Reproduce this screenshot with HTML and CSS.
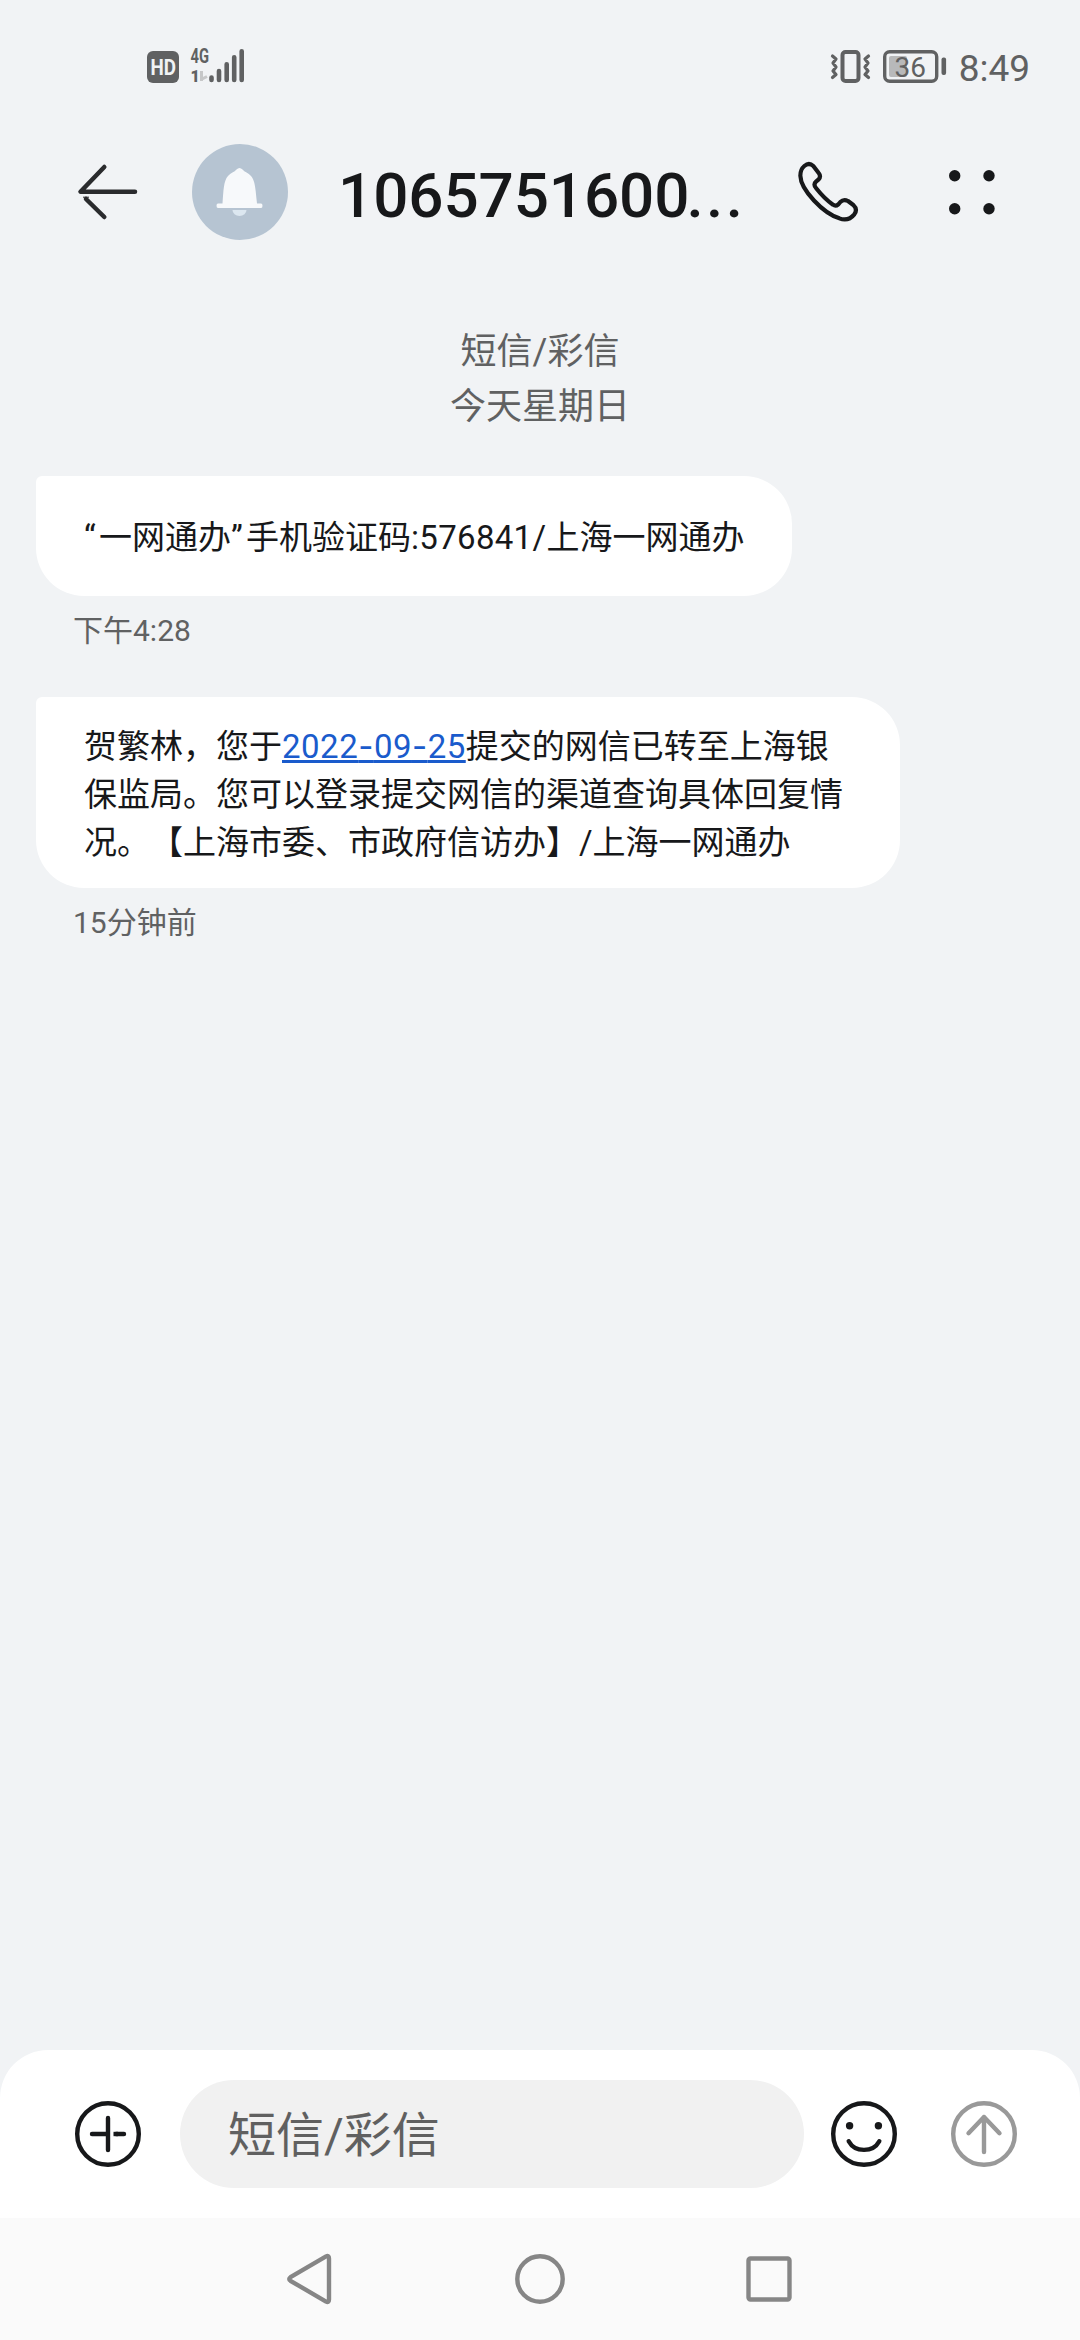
FILE: index.html
```html
<!DOCTYPE html>
<html lang="zh-CN">
<head>
  <meta charset="UTF-8" />
  <meta name="viewport" content="width=device-width, initial-scale=1.0" />
  <title>短信/彩信</title>
  <link rel="stylesheet" href="styles.css">
</head>
<body>

<div class="status-bar">
  <div class="status-left">
    <svg class="hd" width="32" height="32" viewBox="0 0 32 32">
      <rect width="32" height="32" rx="6" fill="#606162"/>
      <text x="3.500" y="24" textLength="25.500" lengthAdjust="spacingAndGlyphs">HD</text>
    </svg>
    <svg class="signal" width="56" height="40" viewBox="190 46 56 40">
      <text class="net" x="190.5" y="63.2" textLength="18.5" lengthAdjust="spacingAndGlyphs">4G</text>
      <text class="sim" x="190.5" y="82">1</text>
      <path d="M201.500 71v10M202 79l5-2.500" stroke="#c6c7c8" stroke-width="3" fill="none"/>
      <path d="M211.500 77.500v2.500M219 71v9M226.700 64.200v15.800M234.200 57.200v22.800M241.700 51.200v28.800" stroke="#606162" stroke-width="4.600" stroke-linecap="round"/>
    </svg>
  </div>
  <div class="status-right">
    <svg width="44" height="36" viewBox="829 48 44 36" fill="none" stroke="#606162">
      <rect x="842.500" y="52" width="16" height="29" rx="3" stroke-width="4"/>
      <path d="M832.500 56l3.500 3-3 4 3 4-3 4 3 3.500-3.500 3M868.500 56l-3.500 3 3 4-3 4 3 4-3 3.500 3.500 3" stroke-width="3.200" stroke-linecap="round" stroke-linejoin="round"/>
    </svg>
    <svg class="battery" width="66" height="36" viewBox="882 48 66 36">
      <rect x="889" y="56" width="18" height="21" rx="2" fill="#b8b9ba"/>
      <rect x="884.700" y="51.700" width="52" height="29.600" rx="5" fill="none" stroke="#606162" stroke-width="3.400"/>
      <rect x="941.500" y="57.500" width="4.600" height="17.500" rx="2" fill="#606162"/>
      <text class="level" x="910.300" y="76.700" text-anchor="middle">36</text>
    </svg>
    <span class="clock">8:49</span>
  </div>
</div>

<header class="header">
  <svg class="back" width="64" height="60" viewBox="76 162 64 60" fill="none" stroke="#2a2b2d" stroke-width="4.500" stroke-linecap="round" stroke-linejoin="round">
    <path d="M104.300 167L80.500 191.700H135"/>
    <path d="M86 199L104.300 217"/>
    <path d="M83 197.200h6" stroke-width="1" stroke-linecap="butt"/>
  </svg>
  <div class="avatar">
    <svg width="96" height="96" viewBox="192 144 96 96">
      <path d="M232.500 210h14a7 6 0 0 1-14 0z" fill="#dce7f0"/>
      <path d="M222.500 203.500C223.500 191 223.500 181 228 176C230.500 173 234.500 172 236.500 169.500Q239.500 166.500 242.500 169.500C244.500 172 248.500 173 251 176C255.500 181 255.500 191 257 203.500H261Q262.500 203.500 262.500 205.800T261 208H218Q216.500 208 216.500 205.800T218 203.500z" fill="#f7f9fb"/>
    </svg>
  </div>
  <h1 class="number">1065751600<span class="dots">...</span></h1>
  <svg class="call" width="65" height="65" viewBox="75 90 195 195">
    <path d="M103 108Q117 96 130 108L146 129Q154 139 146 148L138 155Q129 163 138 174Q163 206 189 224Q197 230 205 223L211 216Q221 206 234 213L250 225Q264 238 253 253Q235 275 208 265C160 250 92 180 91 137Q91 118 103 108Z" fill="none" stroke="#17181a" stroke-width="12.500" stroke-linejoin="round"/>
  </svg>
  <svg class="more" width="48" height="48" viewBox="948 167 48 48" fill="#17181a">
    <circle cx="954.700" cy="174.700" r="5.700"/>
    <circle cx="989" cy="174.700" r="5.700"/>
    <circle cx="954.700" cy="207.700" r="5.700"/>
    <circle cx="989" cy="207.700" r="5.700"/>
  </svg>
</header>

<main class="thread">
  <div class="day">
    <div>短信/彩信</div>
    <div>今天星期日</div>
  </div>

  <div class="message">
    <div class="bubble code"><span class="quote">“</span>一网通办<span class="quote">”</span>手机验证码<span class="digits">:576841/</span>上海一网通办</div>
    <div class="time">下午4:28</div>
  </div>

  <div class="message">
    <div class="bubble notice">贺繁林，您于<a class="date">2022<span>-</span>09<span>-</span>25</a>提交的网信已转至上海银<br>保监局。您可以登录提交网信的渠道查询具体回复情<br>况。【上海市委、市政府信访办】/上海一网通办</div>
    <div class="time">15分钟前</div>
  </div>
</main>

<footer class="composer">
  <svg width="72" height="72" viewBox="-36 -36 72 72" fill="none" stroke="#17181a" stroke-width="4.400" stroke-linecap="round">
    <circle r="30.800"/>
    <path d="M-16 0H0M0-16V16M8 0h8"/>
    <path d="M5.500 0H10" stroke-linecap="butt"/>
  </svg>
  <div class="input">短信/彩信</div>
  <svg width="72" height="72" viewBox="-36 -36 72 72" fill="none" stroke="#17181a" stroke-width="4.400" stroke-linecap="round">
    <circle r="30.800"/>
    <path d="M-15.300 7.200C-9 18.800 9 18.800 15.300 7.200"/>
    <circle cx="-14.400" cy="-8.300" r="3.700" fill="#17181a" stroke="none"/>
    <circle cx="14.400" cy="-8.300" r="3.700" fill="#17181a" stroke="none"/>
  </svg>
  <svg class="send" width="72" height="72" viewBox="-36 -36 72 72" fill="none" stroke="#999" stroke-width="4.400" stroke-linecap="round" stroke-linejoin="round">
    <circle r="30.800"/>
    <path d="M0 18V-17M-15.500-.800L0-17L15.500-.800"/>
  </svg>
</footer>

<nav class="nav">
  <svg width="60" height="60" viewBox="-30 -30 60 60"><path d="M-20.500-1.800L15-22.600Q18-24 18-20.500V20.500Q18 24 15 22.600L-20.500 1.800Q-23 0-20.500-1.800Z"/></svg>
  <svg width="60" height="60" viewBox="-30 -30 60 60"><circle r="22.700"/></svg>
  <svg width="60" height="60" viewBox="-30 -30 60 60"><rect x="-20.500" y="-20.500" width="41" height="41" rx="2"/></svg>
</nav>

</body>
</html>
```
FILE: styles.css
```css
html, body {
  margin: 0;
  padding: 0;
}

body {
  width: 1080px;
  height: 2340px;
  display: flex;
  flex-direction: column;
  overflow: hidden;
  background: #f1f3f5;
  color: #17181a;
  font-family: Roboto, "Noto Sans CJK SC", sans-serif;
  text-spacing-trim: space-all;
}

svg {
  display: block;
  flex: none;
}

/* status bar */
.status-bar {
  height: 88px;
  box-sizing: border-box;
  padding: 46px 50px 0 147px;
  display: flex;
  justify-content: space-between;
  color: #606162;
}

.status-left {
  display: flex;
  gap: 11px;
}

.hd {
  margin-top: 5px;
}

.hd text {
  font-size: 22px;
  font-weight: 700;
  fill: #f1f3f5;
}

.signal {
  overflow: visible;
}

.net {
  font-size: 20px;
  font-weight: 700;
  fill: #606162;
}

.sim {
  font-size: 16px;
  font-weight: 900;
  fill: #606162;
}

.status-right {
  display: flex;
  padding-top: 2px;
}

.battery {
  margin-left: 9px;
}

.level {
  font-size: 28px;
  fill: #606162;
}

.clock {
  margin-left: 11px;
  font-size: 37px;
  line-height: 41px;
}

/* header */
.header {
  height: 208px;
  box-sizing: border-box;
  padding: 56px 84px 56px 76px;
  display: flex;
  align-items: center;
}

.avatar {
  width: 96px;
  height: 96px;
  margin-left: 52px;
  border-radius: 50%;
  background: #b6c4d2;
}

.number {
  width: 454px;
  margin: 8px 0 0 50px;
  font-size: 62px;
  font-weight: 500;
  line-height: 72px;
  letter-spacing: -0.1px;
  white-space: nowrap;
}

.dots {
  margin-left: -3px;
  letter-spacing: 2.4px;
}

.call {
  margin-left: 3px;
}

.more {
  margin-left: 88px;
}

/* messages */
.thread {
  flex: 1;
}

.day {
  margin: 29px 0 41px;
  color: #606162;
  font-size: 36px;
  line-height: 55px;
  text-align: center;
}

.message {
  padding-left: 36px;
  margin-bottom: 44px;
}

.bubble {
  width: 660px;
  padding: 25px 48px 21px;
  border-radius: 6px 48px 48px 48px;
  background: #fff;
  font-size: 33px;
  line-height: 48px;
  white-space: nowrap;
}

.code {
  padding: 38px 48px 34px;
}

.notice {
  width: 768px;
}

.quote {
  letter-spacing: 3.3px;
}

.digits {
  letter-spacing: 0.3px;
}

.date {
  display: inline-block;
  color: #1a5bcc;
  letter-spacing: 0.5px;
  text-decoration: underline;
}

.date span {
  font-family: Inter, sans-serif;
}

.time {
  margin: 12px 0 0 37px;
  color: #606162;
  font-size: 30px;
  line-height: 45px;
}

/* bottom */
.composer {
  height: 168px;
  box-sizing: border-box;
  padding: 0 60px 0 72px;
  display: flex;
  align-items: center;
  border-radius: 48px 48px 0 0;
  background: #fff;
}

.input {
  width: 624px;
  height: 108px;
  box-sizing: border-box;
  margin: 0 24px 0 36px;
  padding-left: 48px;
  border-radius: 54px;
  background: #f1f1f1;
  color: #606060;
  font-size: 48px;
  line-height: 111px;
}

.send {
  margin-left: 48px;
}

.nav {
  height: 122px;
  display: flex;
  justify-content: center;
  align-items: center;
  gap: 169px;
  background: #fafafa;
}

.nav path, .nav circle, .nav rect {
  fill: none;
  stroke: #868686;
  stroke-width: 4.400px;
}
```
